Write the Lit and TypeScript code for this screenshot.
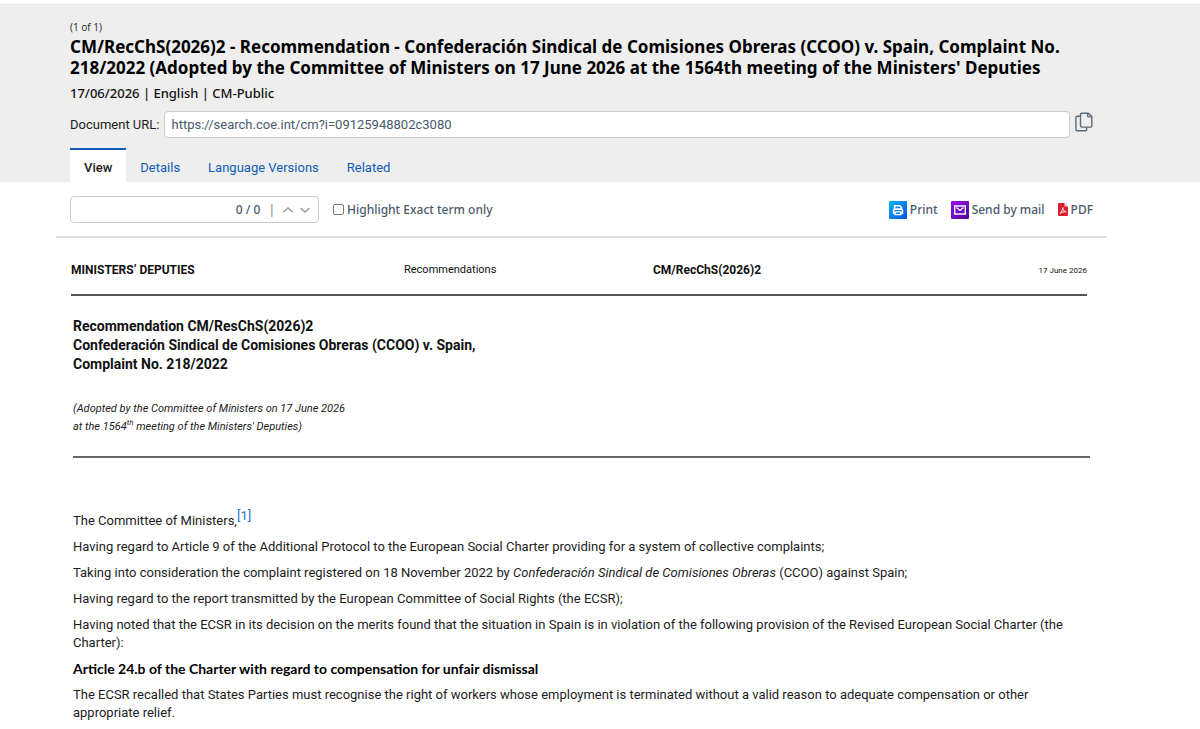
import { LitElement, html, css, svg } from "lit";
import { customElement } from "lit/decorators.js";

const copyIcon = svg`<svg width="18" height="20" viewBox="0 0 18 20" fill="none" stroke="#5a6b7b" stroke-width="1.4" stroke-linejoin="round">
  <path d="M6.7 1.2h6.600l3.500 3.400v9a1.500 1.500 0 0 1-1.500 1.500H7a1.500 1.500 0 0 1-1.500-1.500V2.500A1.300 1.300 0 0 1 6.700 1.200z"/>
  <path d="M12.700 1.400v2.300a1.200 1.200 0 0 0 1.200 1.200h2.600"/>
  <path d="M5.300 4.200H2.400A1.500 1.500 0 0 0 .9 5.700v11.600a1.500 1.500 0 0 0 1.500 1.500h7.800a1.500 1.500 0 0 0 1.500-1.500v-2"/>
</svg>`;

const printIcon = svg`<svg width="18" height="18" viewBox="0 0 18 18">
  <defs><linearGradient id="pg" x1="0" y1="0" x2="1" y2="1"><stop offset="0" stop-color="#08b4f4"/><stop offset="1" stop-color="#0a50e0"/></linearGradient></defs>
  <rect width="18" height="18" rx="1" fill="url(#pg)"/>
  <path d="M5.600 8V4.700h5l1.800 1.700V8" fill="none" stroke="#fff" stroke-width="1.600"/>
  <path d="M5.800 12.200H4.600V9.400A1.300 1.300 0 0 1 5.900 8.100h6.200a1.300 1.300 0 0 1 1.300 1.300v2.800h-1.200" fill="none" stroke="#fff" stroke-width="1.600"/>
  <path d="M6.200 10.900h5.600v2.700H6.200z" fill="none" stroke="#fff" stroke-width="1.400"/>
</svg>`;

const mailIcon = svg`<svg width="18" height="18" viewBox="0 0 18 18">
  <defs><linearGradient id="mg" x1="0" y1="0" x2="1" y2="1"><stop offset="0" stop-color="#9a0cf0"/><stop offset="1" stop-color="#4c0a96"/></linearGradient></defs>
  <rect width="18" height="18" rx="1" fill="url(#mg)"/>
  <rect x="3.700" y="5" width="10.600" height="8" fill="none" stroke="#fff" stroke-width="1.400"/>
  <path d="M5.500 6.500 9 9.400l3.500-2.900" fill="none" stroke="#fff" stroke-width="1.300"/>
</svg>`;

const pdfIcon = svg`<svg width="10" height="13" viewBox="0 0 10 13">
  <path d="M0 1a1 1 0 0 1 1-1h5.500L10 3.500V12a1 1 0 0 1-1 1H1a1 1 0 0 1-1-1z" fill="#dc1f2e"/>
  <path d="M6.500 0 10 3.500H6.500z" fill="#fff" opacity=".75"/>
  <path d="M2 10.600c1.400-.8 2.700-3.600 2.800-6 .2 2.600 1.400 4 3.300 4.300-2.200-.4-4.300.2-6.100 1.700z" fill="none" stroke="#fff" stroke-width=".9" stroke-linejoin="round"/>
</svg>`;

@customElement("app-root")
export class AppRoot extends LitElement {
  static styles = css`
    :host {
      display: block;
      background: #fff;
      color: #1c1c1c;
      font: 13px/18px "Segoe UI", "Roboto", sans-serif;
    }
    h1, h2, p { margin: 0; }
    a { color: #0f5cb5; text-decoration: none; }
    button { border: 0; padding: 0; background: none; font: inherit; color: inherit; display: flex; }
    input { font: inherit; box-sizing: border-box; margin: 0; }
    .wrap { margin: 0 93px 0 56px; padding: 0 14px; }
    .banner { margin-top: 4px; border-top: 1px solid #e4e4e4; background: #eee; padding-top: 15px; display: flow-root; }
    .count { font-family: "Segoe UI", "Open Sans", sans-serif; font-size: 10px; line-height: 14px; margin-bottom: 2px; }
    .title { font-family: "Segoe UI", "Noto Sans", sans-serif; font-size: 17px; line-height: 21px; font-weight: 700; color: #000; }
    .meta { font-family: "Segoe UI", "Noto Sans", sans-serif; font-weight: 500; line-height: 18px; margin: 6px 0 9px; color: #111; }
    .urlrow { display: flex; align-items: center; gap: 5px; }
    .url {
      flex: 1; min-width: 0; height: 27px; padding: 0 6px;
      border: 1px solid #ccc; border-radius: 4px; background: #fff; color: #495a6b;
    }
    .copy { align-self: flex-start; padding-top: 1px; }
    .tabs { display: flex; margin-top: 10px; }
    .tab { padding: 10px 14px 6px; line-height: 16px; border-top: 2px solid transparent; }
    .active { background: #fff; border-top-color: #0f5cb5; color: #1c1c1c; font-weight: 500; }
    .tools { display: flex; align-items: center; padding-top: 14px; padding-bottom: 13px; color: #495a6b; font-family: "Segoe UI", "Noto Sans", sans-serif; font-size: 12px; font-weight: 500; border-bottom: 2px solid #ddd; }
    .find {
      display: flex; align-items: center; width: 249px; height: 27px; box-sizing: border-box;
      border: 1px solid #ccc; border-radius: 4px; padding-right: 7px;
    }
    .term { flex: 1; min-width: 0; border: 0; background: none; outline: 0; }
    .bar { color: #888; margin: 0 7px 0 8px; }
    .find button + button { margin-left: 5px; }
    .exact { display: flex; align-items: center; gap: 3px; margin-left: 14px; }
    .box { width: 11px; height: 11px; appearance: none; border: 1px solid #777; border-radius: 2px; background: #fff; }
    .actions { display: flex; align-items: center; gap: 13px; margin-left: auto; }
    .actions button { align-items: center; gap: 3px; }
    .doc { padding-right: 17px; padding-left: 17px; }
    .head {
      display: grid; grid-template-columns: 333px 249px 1fr auto; align-items: center;
      margin: 23px 3px 0 -2px; padding-bottom: 15px; border-bottom: 2px solid #555; color: #111;
      font-family: "Arial Narrow", "Roboto", sans-serif; font-size: 11px;
    }
    .head strong { font-size: 12px; }
    .date { font-size: 8px; padding-top: 2px; line-height: 16px; }
    .intro {
      border-bottom: 2px solid #666; padding: 21px 0 20px;
      font-family: "Arial Narrow", "Roboto", sans-serif;
    }
    .heading { font-size: 14px; line-height: 19px; font-weight: 700; color: #111; }
    .adopted { font-size: 11px; font-style: italic; margin-top: 26px; }
    .adopted sup { font-size: 8px; line-height: 0; }
    .body { display: grid; gap: 8px; margin-top: 54px; padding: 0 16px 8px 0; }
    .body sup { line-height: 0; font-size: 13px; }
    .body sup a { color: #1976d2; }
    .body h2 { color: #000; font-family: "Segoe UI", "Lato", sans-serif; font-size: 14px; line-height: 18px; font-weight: 700; }
  `;

  render() {
    return html`
      <header class="banner">
        <div class="wrap">
          <p class="count">(1 of 1)</p>
          <h1 class="title">CM/RecChS(2026)2 - Recommendation - Confederación Sindical de Comisiones Obreras (CCOO) v. Spain, Complaint No. 218/2022 (Adopted by the Committee of Ministers on 17 June 2026 at the 1564th meeting of the Ministers' Deputies</h1>
          <p class="meta">17/06/2026 | English | CM-Public</p>
          <div class="urlrow">
            <label for="url">Document URL:</label>
            <input class="url" id="url" type="text" readonly value="https://search.coe.int/cm?i=09125948802c3080" />
            <button class="copy" aria-label="Copy URL">${copyIcon}</button>
          </div>
          <nav class="tabs">
            <a class="tab active" href="#view">View</a>
            <a class="tab" href="#details">Details</a>
            <a class="tab" href="#languages">Language Versions</a>
            <a class="tab" href="#related">Related</a>
          </nav>
        </div>
      </header>

      <div class="wrap tools">
        <div class="find">
          <input class="term" type="text" aria-label="Find in document" />
          <span>0 / 0</span><span class="bar">|</span>
          <button aria-label="Previous match"><svg width="12" height="12" viewBox="0 0 12 12" fill="none" stroke="#999" stroke-width="1.400"><path d="M1.500 8 6 4l4.500 4"/></svg></button>
          <button aria-label="Next match"><svg width="12" height="12" viewBox="0 0 12 12" fill="none" stroke="#999" stroke-width="1.400"><path d="M1.500 4 6 8l4.500-4"/></svg></button>
        </div>
        <label class="exact"><input class="box" type="checkbox" />Highlight Exact term only</label>
        <div class="actions">
          <button>${printIcon}Print</button>
          <button>${mailIcon}Send by mail</button>
          <button>${pdfIcon}PDF</button>
        </div>
      </div>

      <main class="wrap doc">
        <div class="head">
          <strong>MINISTERS’ DEPUTIES</strong>
          <span>Recommendations</span>
          <strong>CM/RecChS(2026)2</strong>
          <span class="date">17 June 2026</span>
        </div>
        <div class="intro">
          <h2 class="heading">Recommendation CM/ResChS(2026)2<br />Confederación Sindical de Comisiones Obreras (CCOO) v. Spain,<br />Complaint No. 218/2022</h2>
          <p class="adopted">(Adopted by the Committee of Ministers on 17 June 2026<br />at the 1564<sup>th</sup> meeting of the Ministers' Deputies)</p>
        </div>
        <div class="body">
          <p>The Committee of Ministers,<sup><a href="#note-1">[1]</a></sup></p>
          <p>Having regard to Article 9 of the Additional Protocol to the European Social Charter providing for a system of collective complaints;</p>
          <p>Taking into consideration the complaint registered on 18 November 2022 by <em>Confederación Sindical de Comisiones Obreras</em> (CCOO) against Spain;</p>
          <p>Having regard to the report transmitted by the European Committee of Social Rights (the ECSR);</p>
          <p>Having noted that the ECSR in its decision on the merits found that the situation in Spain is in violation of the following provision of the Revised European Social Charter (the Charter):</p>
          <h2>Article 24.b of the Charter with regard to compensation for unfair dismissal</h2>
          <p>The ECSR recalled that States Parties must recognise the right of workers whose employment is terminated without a valid reason to adequate compensation or other appropriate relief.</p>
        </div>
      </main>
    `;
  }
}
